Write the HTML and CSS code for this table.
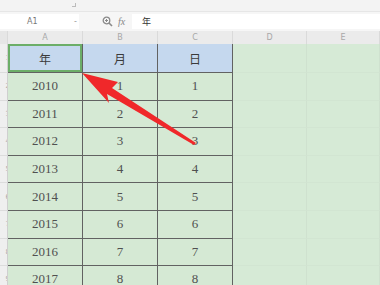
FILE: index.html
```html
<!DOCTYPE html>
<html>
<head>
<meta charset="utf-8">
<link rel="stylesheet" href="styles.css">
</head>
<body>
<div class="page">
  <div class="toolbar"><span class="corner"></span></div>
  <div class="fbar">
    <div class="namebox"><span class="ref">A1</span><span class="dd">-</span></div>
    <div class="tools">
      <svg class="zoomic" width="11" height="11" viewBox="0 0 11 11"><circle cx="4.5" cy="4.5" r="3.3" fill="none" stroke="#8a8a8a" stroke-width="1.3"/><line x1="7" y1="7" x2="10" y2="10" stroke="#8a8a8a" stroke-width="1.6"/><line x1="3" y1="4.5" x2="6" y2="4.5" stroke="#8a8a8a" stroke-width="1"/><line x1="4.5" y1="3" x2="4.5" y2="6" stroke="#8a8a8a" stroke-width="1"/></svg>
      <span class="fx">fx</span>
    </div>
    <div class="input">年</div>
  </div>
  <div class="grid">
    <div class="ch corner-h"></div>
    <div class="ch">A</div><div class="ch">B</div><div class="ch">C</div><div class="ch">D</div><div class="ch">E</div>

    <div class="rh"><span>1</span></div>
    <div class="c hd sel">年</div><div class="c hd">月</div><div class="c hd">日</div><div class="c e"></div><div class="c e"></div>

    <div class="rh"><span>2</span></div><div class="c n">2010</div><div class="c n">1</div><div class="c n">1</div><div class="c e"></div><div class="c e"></div>
    <div class="rh"><span>3</span></div><div class="c n">2011</div><div class="c n">2</div><div class="c n">2</div><div class="c e"></div><div class="c e"></div>
    <div class="rh"><span>4</span></div><div class="c n">2012</div><div class="c n">3</div><div class="c n">3</div><div class="c e"></div><div class="c e"></div>
    <div class="rh"><span>5</span></div><div class="c n">2013</div><div class="c n">4</div><div class="c n">4</div><div class="c e"></div><div class="c e"></div>
    <div class="rh"><span>6</span></div><div class="c n">2014</div><div class="c n">5</div><div class="c n">5</div><div class="c e"></div><div class="c e"></div>
    <div class="rh"><span>7</span></div><div class="c n">2015</div><div class="c n">6</div><div class="c n">6</div><div class="c e"></div><div class="c e"></div>
    <div class="rh"><span>8</span></div><div class="c n">2016</div><div class="c n">7</div><div class="c n">7</div><div class="c e"></div><div class="c e"></div>
    <div class="rh"><span>9</span></div><div class="c n">2017</div><div class="c n">8</div><div class="c n">8</div><div class="c e"></div><div class="c e"></div>
  </div>
  <svg class="arrow" width="380" height="285" viewBox="0 0 380 285">
    <polygon points="82,73 118,82 112,88 196,143 194,145 107,94 109,103" fill="#f0282a"/>
  </svg>
</div>
</body>
</html>
```
FILE: styles.css
```css
html, body { margin: 0; padding: 0; }
body { width: 380px; height: 285px; overflow: hidden; background: #f4f4f4; font-family: "Liberation Serif", serif; }
.page { position: relative; width: 380px; height: 285px; overflow: hidden; }
.toolbar { height: 11px; background: #f3f3f3; border-bottom: 1px solid #e6e6e6; position: relative; }
.corner { position: absolute; left: 72px; top: 3px; width: 3px; height: 3px; border-right: 1px solid #bbb; border-bottom: 1px solid #bbb; }
.fbar { height: 19px; display: flex; align-items: center; background: #f6f6f6; }
.namebox { width: 79px; height: 15px; background: #fff; display: flex; align-items: center; justify-content: space-between; box-sizing: border-box; padding: 0 2px 0 0; font-family: "DejaVu Sans", sans-serif; font-size: 8px; color: #777; }
.ref { margin-left: 27px; }
.dd { color: #999; }
.tools { width: 53px; display: flex; align-items: center; gap: 5px; padding-left: 23px; box-sizing: border-box; }
.fx { font-family: "Liberation Serif", serif; font-style: italic; font-size: 10px; color: #888; }
.input { flex: 1; height: 15px; background: #fff; font-family: "Noto Sans CJK SC", sans-serif; font-size: 9px; line-height: 15px; color: #333; padding-left: 10px; }
.grid { display: grid; grid-template-columns: 8px 75px 75px 75px 74px 73px; grid-template-rows: 13px 29px repeat(8, 27.6px); }
.ch { background: #ebebeb; color: #a8a8a8; font-family: "DejaVu Sans", sans-serif; font-size: 8px; display: flex; align-items: center; justify-content: center; border-right: 1px solid #dadada; box-sizing: border-box; }
.corner-h { background: #e6e6e6; }
.rh { background: #efefef; color: #aaa; font-family: "DejaVu Sans", sans-serif; font-size: 7px; display: flex; align-items: center; justify-content: flex-end; overflow: hidden; border-bottom: 1px solid #dcdcdc; border-right: 1px solid #cfcfcf; box-sizing: border-box; }
.rh span { margin-right: -3px; }
.c { box-sizing: border-box; display: flex; align-items: center; justify-content: center; background: #d5e9d4; border-right: 1px solid #626262; border-bottom: 1px solid #626262; color: #505050; font-size: 13px; }
.hd { background: #c5d8ee; font-family: "Noto Sans CJK SC", sans-serif; font-size: 12px; color: #3a3a3a; }
.sel { box-shadow: inset 0 0 0 2px #6cae68; }
.n { font-family: "Liberation Serif", serif; }
.e { background: #d6ead6; border-right: 1px solid #cfe1cf; border-bottom: 1px solid #d2e5d2; }
.arrow { position: absolute; left: 0; top: 0; pointer-events: none; }
```
